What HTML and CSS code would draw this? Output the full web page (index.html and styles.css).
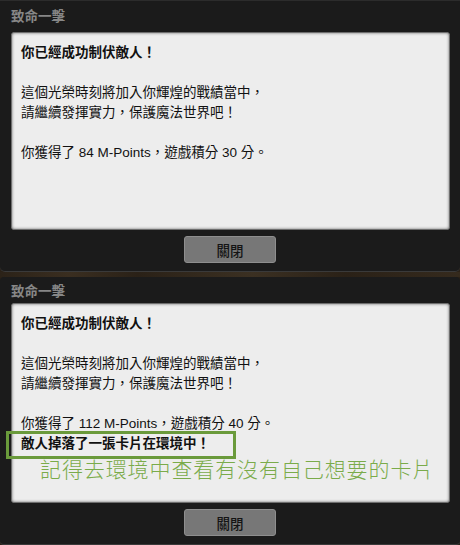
FILE: index.html
```html
<!DOCTYPE html>
<html lang="zh-TW">

<head>
    <meta charset="UTF-8">
    <meta name="viewport" content="width=device-width, initial-scale=1.0">
    <title>致命一擊</title>
    <link rel="stylesheet" href="styles.css">
</head>

<body>

    <div class="dialog first">
        <h2 class="title">致命一擊</h2>
        <div class="box">
            <p>你已經成功制伏敵人！</p>
            <p class="gap">這個光榮時刻將加入你輝煌的戰績當中，<br>請繼續發揮實力，保護魔法世界吧！</p>
            <p class="gap">你獲得了 84 M-Points，遊戲積分 30 分。</p>
        </div>
        <div class="foot">
            <button class="btn">關閉</button>
        </div>
    </div>

    <div class="strip"></div>

    <div class="dialog second">
        <h2 class="title">致命一擊</h2>
        <div class="box">
            <p>你已經成功制伏敵人！</p>
            <p class="gap">這個光榮時刻將加入你輝煌的戰績當中，<br>請繼續發揮實力，保護魔法世界吧！</p>
            <p class="gap">你獲得了 112 M-Points，遊戲積分 40 分。</p>
            <p><span class="drop">敵人掉落了一張卡片在環境中！</span></p>
            <!-- 手寫註記 -->
            <p class="note">記得去環境中查看有沒有自己想要的卡片</p>
        </div>
        <div class="foot">
            <button class="btn">關閉</button>
        </div>
    </div>

</body>

</html>
```

FILE: styles.css
```css
* {
    margin: 0;
    padding: 0;
    box-sizing: border-box;
}

body {
    width: 460px;
    background: #2a2117;
    font-family: "Liberation Sans", "Noto Sans CJK TC", sans-serif;
    font-size: 13.5px;
    color: #111;
}

.dialog {
    background: #1b1b1b;
    border-bottom: 1px solid #3a3a3a;
    border-radius: 0 0 5px 5px;
    padding: 0 10px 7px 11px;
}

.first {
    height: 272px;
    border-top: 1px solid #2c2c2c;
    padding-top: 4px;
}

.second {
    height: 268px;
    border-radius: 4px;
    padding-top: 3px;
}

.title {
    font-size: 13.5px;
    font-weight: bold;
    line-height: 20px;
    color: #878787;
    font-family: "Noto Sans CJK TC", sans-serif;
}

.first .title {
    margin-bottom: 7px;
}

.second .title {
    margin-bottom: 3px;
}

.box {
    background: #ededed;
    border: 1px solid #6e6e6e;
    border-radius: 3px;
    box-shadow: inset 0 0 3px rgba(0, 0, 0, .55);
    padding: 10px 9px;
    line-height: 20px;
}

.first .box {
    height: 198px;
}

.second .box {
    height: 200px;
}

.box p:first-child {
    font-weight: 600;
}

.drop {
    font-weight: bold;
}

.gap {
    margin-top: 20px;
}

.drop {
    position: relative;
    display: inline-block;
}

.drop::before {
    content: "";
    position: absolute;
    top: -3px;
    bottom: -5px;
    left: -15px;
    right: -26px;
    border: 3px solid #6a9a3b;
}

.note {
    margin-top: 1px;
    padding-left: 19px;
    font-family: "Noto Sans CJK TC", sans-serif;
    font-weight: 300;
    font-size: 21px;
    letter-spacing: 0.9px;
    line-height: 26px;
    color: #7aab4a;
}

.foot {
    display: flex;
    justify-content: center;
    padding-top: 6px;
    padding-right: 1px;
}

.btn {
    width: 92px;
    height: 27px;
    background: #777;
    border: 1px solid #8e8e8e;
    border-radius: 3px;
    font-family: "Noto Sans CJK TC", sans-serif;
    font-size: 13.5px;
    font-weight: 500;
    color: #141414;
}

.strip {
    height: 5px;
    background: linear-gradient(90deg, #2b2218 0%, #3a2e20 15%, #2a2117 30%, #3b3022 55%, #2a2117 75%, #352a1d 100%);
}
```
